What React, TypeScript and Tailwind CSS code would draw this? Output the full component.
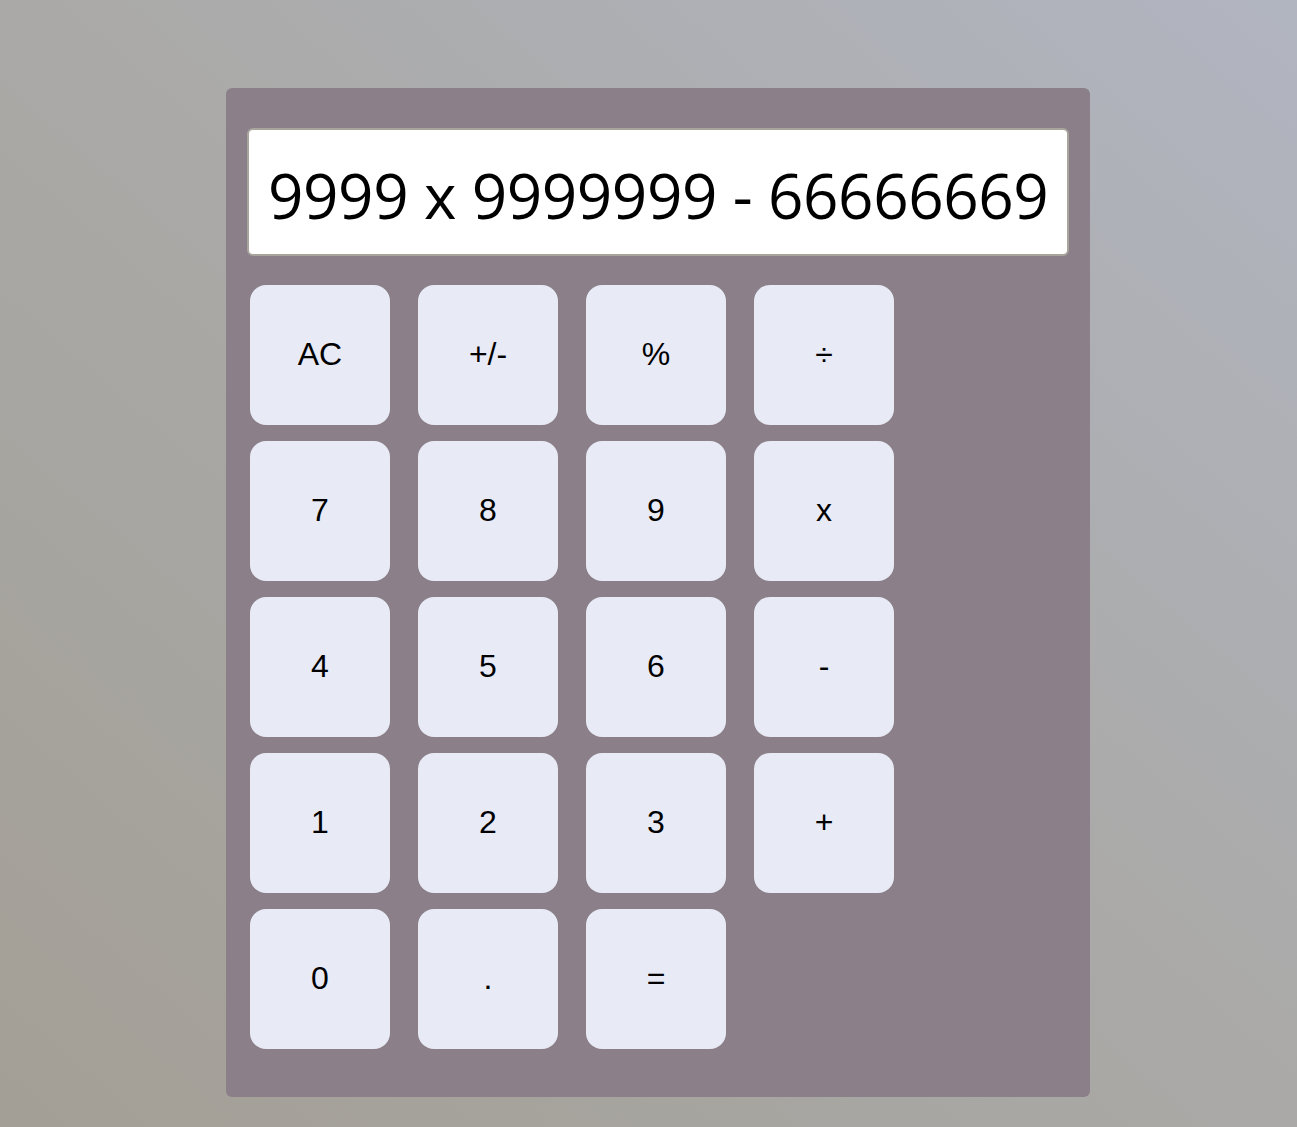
import React from "react";

const keys: string[] = [
  "AC", "+/-", "%", "÷",
  "7", "8", "9", "x",
  "4", "5", "6", "-",
  "1", "2", "3", "+",
  "0", ".", "=",
];

const CalcButton: React.FC<{ label: string }> = ({ label }) => (
  <button className="w-[140px] h-[140px] rounded-[16px] bg-[#e8eaf6] text-black text-[32px] font-['Liberation_Sans',Arial,sans-serif] flex items-center justify-center pb-[2px]">
    {label}
  </button>
);

const App: React.FC = () => {
  return (
    <div className="min-h-screen w-full bg-[linear-gradient(to_top_right,#a39f96,#aaa9a7_50%,#b1b5c0)] pt-[88px] pb-[30px] pl-[226px]">
      <div className="w-[864px] bg-[#8b8089] rounded-[6px] px-[21px] pt-[40px] pb-[48px]">
        <div className="w-full h-[128px] bg-white border-2 border-[#a7a59c] rounded-[6px] flex items-center pl-[19px] pt-[6px] overflow-hidden">
          <span className="text-[62px] leading-none text-black whitespace-nowrap tracking-[-0.4px] font-['Open_Sans','Noto_Sans',sans-serif]">
            9999 x 9999999 - 66666669
          </span>
        </div>
        <div className="mt-[29px] ml-[3px] grid grid-cols-[repeat(4,140px)] gap-x-[28px] gap-y-[16px]">
          {keys.map((k) => (
            <CalcButton key={k} label={k} />
          ))}
        </div>
      </div>
    </div>
  );
};

export default App;
